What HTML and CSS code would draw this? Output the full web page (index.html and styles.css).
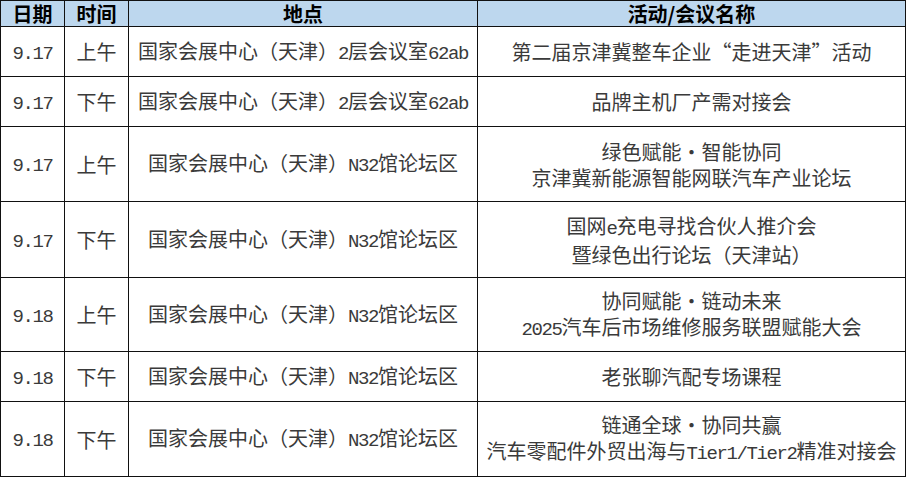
FILE: index.html
```html
<!DOCTYPE html>
<html lang="zh-CN">
<head>
<meta charset="utf-8">
<title>活动/会议日程</title>
<link rel="stylesheet" href="styles.css">
</head>
<body>
<div class="sheet">
  <div class="cell head"><p>日期</p></div>
  <div class="cell head"><p>时间</p></div>
  <div class="cell head"><p>地点</p></div>
  <div class="cell head"><p>活动/会议名称</p></div>

  <div class="cell"><p><span class="en">9.17</span></p></div>
  <div class="cell"><p>上午</p></div>
  <div class="cell"><p>国家会展中心（天津）<span class="en">2</span>层会议室<span class="en">62ab</span></p></div>
  <div class="cell"><p>第二届京津冀整车企业“走进天津”活动</p></div>

  <div class="cell"><p><span class="en">9.17</span></p></div>
  <div class="cell"><p>下午</p></div>
  <div class="cell"><p>国家会展中心（天津）<span class="en">2</span>层会议室<span class="en">62ab</span></p></div>
  <div class="cell"><p>品牌主机厂产需对接会</p></div>

  <div class="cell"><p><span class="en">9.17</span></p></div>
  <div class="cell"><p>上午</p></div>
  <div class="cell"><p>国家会展中心（天津）<span class="en">N32</span>馆论坛区</p></div>
  <div class="cell"><p>绿色赋能·智能协同<br>京津冀新能源智能网联汽车产业论坛</p></div>

  <div class="cell"><p><span class="en">9.17</span></p></div>
  <div class="cell"><p>下午</p></div>
  <div class="cell"><p>国家会展中心（天津）<span class="en">N32</span>馆论坛区</p></div>
  <div class="cell"><p>国网<span class="en">e</span>充电寻找合伙人推介会<br>暨绿色出行论坛（天津站）</p></div>

  <div class="cell"><p><span class="en">9.18</span></p></div>
  <div class="cell"><p>上午</p></div>
  <div class="cell"><p>国家会展中心（天津）<span class="en">N32</span>馆论坛区</p></div>
  <div class="cell"><p>协同赋能·链动未来<br><span class="en">2025</span>汽车后市场维修服务联盟赋能大会</p></div>

  <div class="cell"><p><span class="en">9.18</span></p></div>
  <div class="cell"><p>下午</p></div>
  <div class="cell"><p>国家会展中心（天津）<span class="en">N32</span>馆论坛区</p></div>
  <div class="cell"><p>老张聊汽配专场课程</p></div>

  <div class="cell"><p><span class="en">9.18</span></p></div>
  <div class="cell"><p>下午</p></div>
  <div class="cell"><p>国家会展中心（天津）<span class="en">N32</span>馆论坛区</p></div>
  <div class="cell"><p>链通全球·协同共赢<br>汽车零配件外贸出海与<span class="en">Tier1/Tier2</span>精准对接会</p></div>
</div>
</body>
</html>
```

FILE: styles.css
```css
html, body {
  margin: 0;
  padding: 0;
  background: #ffffff;
}

body {
  font-family: "Noto Sans CJK SC", "Noto Sans", sans-serif;
  font-size: 20px;
  color: #3a3a3a;
}

.sheet {
  display: grid;
  grid-template-columns: 64px 64px 349px 428px;
  grid-template-rows: 26px 50px 50px 75px 76px 74px 50px 75px;
  width: max-content;
  border-left: 1px solid #111;
  border-top: 1px solid #111;
}

.cell {
  box-sizing: border-box;
  border-right: 1px solid #111;
  border-bottom: 1px solid #111;
  display: flex;
  align-items: center;
  justify-content: center;
  min-width: 0;
  padding-top: 1px;
}

.cell p {
  margin: 0;
  text-align: center;
  line-height: 26px;
  white-space: nowrap;
}

.head {
  background: #bdd7ee;
  color: #000;
  font-weight: 700;
  padding-top: 0;
}

.head p {
  line-height: 25px;
}

.en {
  font-family: "Liberation Mono", monospace;
  font-size: 19px;
  letter-spacing: -1.4px;
}
```
